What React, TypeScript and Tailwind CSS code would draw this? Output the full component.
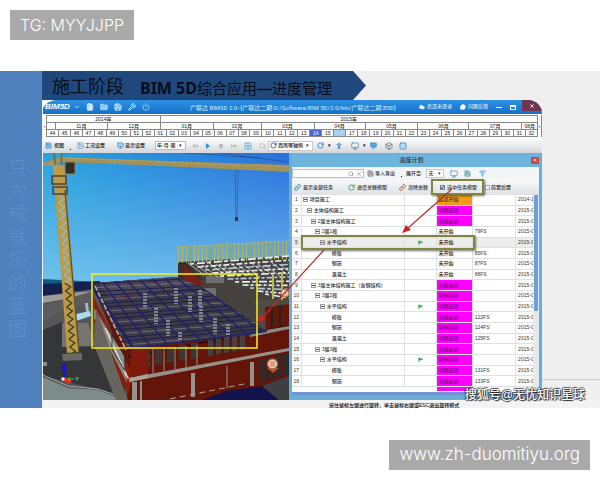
import {
  Box,
  ChevronDown,
  Cloud,
  FilePlus,
  Filter,
  Folder,
  Grid2x2,
  Image,
  Link,
  MessageCircle,
  Monitor,
  PersonStanding,
  Power,
  RotateCw,
  Save,
  Search,
  Wrench,
  X,
} from "lucide-react"

type Task = {
  name: string
  level: number
  leaf?: boolean
  flag?: boolean
  status: "延迟开始" | "可能延迟" | "未开始"
  code?: string
  date: string
}

const tasks: Task[] = [
  { name: "项目施工", level: 0, status: "延迟开始", date: "2014-1" },
  { name: "主体结构施工", level: 1, status: "可能延迟", date: "2015-0" },
  { name: "2层主体结构施工", level: 2, status: "可能延迟", date: "2015-0" },
  { name: "2层1段", level: 3, status: "未开始", code: "79FS", date: "2015-0" },
  { name: "水平结构", level: 4, flag: true, status: "未开始", date: "2015-0" },
  { name: "模板", level: 5, leaf: true, status: "未开始", code: "85FS", date: "2015-0" },
  { name: "钢筋", level: 5, leaf: true, status: "未开始", code: "87FS", date: "2015-0" },
  { name: "混凝土", level: 5, leaf: true, status: "未开始", code: "88FS", date: "2015-0" },
  { name: "3层主体结构施工（含钢结构）", level: 2, status: "可能延迟", date: "2015-0" },
  { name: "3层2段", level: 3, status: "可能延迟", date: "2015-0" },
  { name: "水平结构", level: 4, flag: true, status: "可能延迟", date: "2015-0" },
  { name: "模板", level: 5, leaf: true, status: "可能延迟", code: "122FS", date: "2015-0" },
  { name: "钢筋", level: 5, leaf: true, status: "可能延迟", code: "124FS", date: "2015-0" },
  { name: "混凝土", level: 5, leaf: true, status: "可能延迟", code: "125FS", date: "2015-0" },
  { name: "3层3段", level: 3, status: "可能延迟", date: "2015-0" },
  { name: "水平结构", level: 4, flag: true, status: "可能延迟", date: "2015-0" },
  { name: "模板", level: 5, leaf: true, status: "可能延迟", code: "131FS", date: "2015-0" },
  { name: "钢筋", level: 5, leaf: true, status: "可能延迟", code: "133FS", date: "2015-0" },
]

const indents = ["pl-px", "pl-[5px]", "pl-[9px]", "pl-[13px]", "pl-[18px]", "pl-[30px]"]

const statusColors = {
  延迟开始: "bg-[#f39a1c] text-[#5c3408]",
  可能延迟: "bg-[#ff00ff] text-[#7a007a]",
  未开始: "text-[#222]",
}

const years = [
  { label: "2014年", span: 113 },
  { label: "2015年", span: 377 },
]

const months = [
  { label: "", span: 8 },
  { label: "11月", span: 52 },
  { label: "12月", span: 53 },
  { label: "01月", span: 53 },
  { label: "02月", span: 48 },
  { label: "03月", span: 53 },
  { label: "04月", span: 51 },
  { label: "05月", span: 53 },
  { label: "06月", span: 51 },
  { label: "07月", span: 53 },
  { label: "08月", span: 15 },
]

const weeks = [
  ...Array.from({ length: 9 }, (_, i) => String(44 + i)),
  ...Array.from({ length: 32 }, (_, i) => String(i + 1).padStart(2, "0")),
]

const range = (n: number) => Array.from({ length: n }, (_, i) => i)

function Banner() {
  return (
    <header className="flex h-[29px] w-[324px] shrink-0 items-end bg-[#1f497d] pb-1 pl-2.5 whitespace-nowrap text-[#050d1c] [clip-path:polygon(0_0,96%_0,100%_50%,96%_100%,0_100%)]">
      <h1 className="text-[18px] leading-none">施工阶段</h1>
      <p className="ml-4 text-[15px] leading-none">
        <b className="font-['Noto_Sans'] text-[16px]">BIM 5D</b>
        综合应用<b>—</b>进度管理
      </p>
    </header>
  )
}

function TitleBar() {
  return (
    <div className="relative flex h-[14px] items-center overflow-hidden rounded-tr-[14px] bg-gradient-to-b from-[#2c92e6] to-[#1670c6] text-white">
      <svg className="absolute top-0 left-0 h-2 w-3" viewBox="0 0 12 8" aria-hidden="true">
        <path d="M0 0H12Q4 1 0 8Z" fill="#fff" />
      </svg>
      <strong className="relative w-7 pl-0.5 text-[8px] font-black italic">BIM5D</strong>
      <ChevronDown className="ml-[3px] size-1.5" strokeWidth={3} />
      <div className="ml-1.5 flex items-center gap-[6px] text-[#d5eaff]">
        <button type="button" aria-label="新建"><FilePlus className="size-2" fill="#b9dcfa" stroke="#fff" /></button>
        <button type="button" aria-label="打开"><Folder className="size-2" fill="#8ec5f4" /></button>
        <button type="button" aria-label="保存"><Save className="size-2" fill="#5aa9e8" strokeWidth={3} /></button>
        <button type="button" aria-label="工具"><Wrench className="size-2" strokeWidth={3} /></button>
        <button type="button" aria-label="退出"><Power className="size-2" /></button>
      </div>
      <span className="ml-10 flex-1 font-['Roboto','Noto_Sans_CJK_SC',sans-serif] text-[6px] whitespace-nowrap text-[#d9edff]">
        广联达 BIM5D 2.0--[广联达二期-D:/Software/BIM 5D/2.0/bin/广联达二期.B5D]
      </span>
      <a href="#login" className="flex items-center gap-0.5 text-[5px] whitespace-nowrap">
        <Cloud className="size-1.5" fill="#fff" />
        您还未登录
      </a>
      <a href="#feedback" className="ml-2 flex items-center gap-0.5 text-[5px] whitespace-nowrap">
        <MessageCircle className="size-1.5" fill="#fff" />
        问题反馈
      </a>
      <button type="button" aria-label="最小化" className="ml-2 h-px w-1.5 bg-white" />
      <button type="button" aria-label="最大化" className="ml-2 h-[5px] w-[6px] border border-t-2 border-white" />
      <button type="button" aria-label="关闭" className="ml-1.5 flex h-[11px] w-5 items-center justify-center self-start bg-[#703550]">
        <X className="size-1.5" strokeWidth={3} />
      </button>
    </div>
  )
}

function TimelineRow({ cells }: { cells: { label: string; span: number }[] }) {
  return (
    <div className="flex h-[7px] border-b border-[#888]">
      {cells.map((cell, i) => (
        <div
          key={i}
          className="basis-0 overflow-hidden border-r border-[#888] text-center whitespace-nowrap"
          style={{ flexGrow: cell.span }}
        >
          {cell.label}
        </div>
      ))}
    </div>
  )
}

function Timeline() {
  return (
    <div className="flex bg-[#fdfdfd] pt-px pb-px text-[5px] leading-[6px] font-medium text-[#222]">
      <button type="button" aria-label="上一页" className="w-1 border-r border-[#888]">‹</button>
      <div className="min-w-0 flex-1 border-t border-[#888]">
        <TimelineRow cells={years} />
        <TimelineRow cells={months} />
        <div className="flex h-[7px] border-b border-[#888] leading-[7px]">
          {weeks.map((week) => (
            <div
              key={week}
              className={
                week === "14"
                  ? "flex-1 border-r border-[#888] bg-[#4468dc] text-center text-white"
                  : week === "16"
                    ? "flex-1 border-r border-[#888] bg-[#a9d2f2] text-center text-[#a9d2f2]"
                    : "flex-1 border-r border-[#888] text-center"
              }
            >
              {week}
            </div>
          ))}
        </div>
      </div>
      <button type="button" aria-label="下一页" className="w-1 border-r border-[#888]">›</button>
    </div>
  )
}

function Toolbar() {
  return (
    <div className="flex h-[15px] items-center bg-gradient-to-b from-white to-[#d3d6da] pl-0.5 text-[5px] leading-none font-medium whitespace-nowrap text-[#222]">
      <button type="button" className="flex items-center gap-0.5">
        <Image className="size-[7px] text-[#3484c0]" fill="#8bc8ee" />
        视图
      </button>
      <span className="mt-2 ml-1.5 size-px bg-black" />
      <button type="button" className="ml-1.5 flex items-center gap-px">
        <Image className="size-[7px] text-[#4a88b8]" />
        工况设置
      </button>
      <button type="button" className="ml-3 flex items-center gap-px">
        <Monitor className="size-[7px] text-[#3484c0]" fill="#9fd0f3" />
        显示设置
      </button>
      <div className="ml-2.5 flex h-[9px] items-center border border-[#bbb] bg-white pl-px">
        <select aria-label="时间单位" className="w-[22px] appearance-none bg-transparent">
          <option>年-月-周</option>
        </select>
        <span className="w-1.5">▾</span>
      </div>
      <div className="ml-1.5 flex items-center gap-[7px]">
        <button type="button" aria-label="后退">
          <svg className="h-1.5 w-1.5" viewBox="0 0 6 6"><path d="M3 1V5L0 3ZM6 1V5L3 3Z" fill="#bbb" /></svg>
        </button>
        <button type="button" aria-label="播放">
          <svg className="h-1.5 w-1.5" viewBox="0 0 6 6"><path d="M1 0V6L5 3Z" fill="#2995d2" /></svg>
        </button>
        <button type="button" aria-label="停止">
          <svg className="h-1.5 w-1.5" viewBox="0 0 6 6"><path d="M1 1H5V5H1Z" fill="#bbb" /></svg>
        </button>
        <button type="button" aria-label="前进">
          <svg className="h-1.5 w-1.5" viewBox="0 0 6 6"><path d="M0 1V5L3 3ZM3 1V5L6 3Z" fill="#bbb" /></svg>
        </button>
        <button type="button" aria-label="四视图"><Grid2x2 className="size-2 text-[#3b9dda]" /></button>
        <button type="button" aria-label="快照"><Cloud className="size-[7px] text-[#aaa]" /></button>
      </div>
      <div className="ml-0.5 flex h-[10px] items-center border border-[#ccc] bg-white pl-px">
        <RotateCw className="size-[7px] text-[#225f9c]" strokeWidth={3} />
        <select aria-label="视角" className="ml-px w-[28px] appearance-none bg-transparent">
          <option>西南等轴侧</option>
        </select>
        <span className="w-1.5">▾</span>
      </div>
      <div className="ml-1 flex items-center text-[#2d80bd]">
        <button type="button" aria-label="旋转"><RotateCw className="size-[7px]" strokeWidth={3} /></button>
        <span className="ml-1 text-black">▾</span>
        <button type="button" aria-label="漫游" className="ml-1"><PersonStanding className="size-2" strokeWidth={3} /></button>
        <button type="button" aria-label="测量" className="ml-2"><Monitor className="size-2" /></button>
        <span className="ml-1 text-black">▾</span>
        <button type="button" aria-label="标注" className="ml-1"><Monitor className="size-[7px]" fill="#5ca9dd" /></button>
        <button type="button" aria-label="剖切" className="ml-2 text-[#555]"><Box className="size-2" /></button>
        <button type="button" aria-label="布局" className="ml-1.5"><Grid2x2 className="size-2" fill="#b7d9f1" /></button>
      </div>
    </div>
  )
}

// The view box keeps the coordinates of the slide, so that parts line up with the callouts.
function Scene() {
  return (
    <svg
      className="block h-full w-full"
      viewBox="43 153 246 247"
      preserveAspectRatio="none"
      role="img"
      aria-label="施工现场三维模型"
    >
      <defs>
        <linearGradient id="sky" x1="0" x2="1" y1="0" y2="0">
          <stop offset="0" stopColor="#27a3dc" />
          <stop offset="1" stopColor="#2870dc" />
        </linearGradient>
        <linearGradient id="haze" x1="0" x2="0" y1="0" y2="1">
          <stop offset="0" stopColor="#8fd0f2" stopOpacity="0" />
          <stop offset="1" stopColor="#8fd0f2" stopOpacity="0.7" />
        </linearGradient>
        <clipPath id="roof">
          <path d="M94 283L176 277L200 286L267 331L250 335L134 348H128L94 292Z" />
        </clipPath>
      </defs>
      <rect x="43" y="153" width="246" height="130" fill="url(#sky)" />
      <rect x="43" y="153" width="246" height="130" fill="url(#haze)" />

      {/* ground */}
      <path d="M43 279L100 282V400H43Z" fill="#0d5c86" />
      <path d="M43 284L100 281V400H43Z" fill="#14204f" />
      <path d="M43 296L100 288L289 290V400H43Z" fill="#565658" />
      <path d="M43 296L92 291V294L43 303Z" fill="#a09c96" />
      <path d="M43 306L93 291V302L62 312L43 322Z" fill="#5d5c5c" />
      <path d="M43 330L62 322L95 345L125 385V396L43 376Z" fill="#353638" />
      <path d="M62 323H88L96 346L62 347Z" fill="#77736e" />
      <path d="M76 314L90 311L91 316L76 321Z" fill="#a9daf4" />
      <path d="M85 303H88L89 312H86Z" fill="#9bb9c8" />
      <path d="M43 362H47V366H43Z" fill="#8a8a88" />
      <path d="M43 377L68 388L98 390L124 400H43Z" fill="#7d8c89" />
      <path d="M43 375L68 386L98 389L124 398" fill="none" stroke="#a0aaa6" />

      {/* rear block */}
      <path d="M178 262L289 256V340H220L178 284Z" fill="#46423f" />
      <path d="M178 262H186L204 280H178Z" fill="#3b302c" />
      <path d="M184 266L205 285H184Z" fill="#7c1e13" />
      <path d="M199 288H216V296H201ZM206 276H224V283H206ZM205 301L221 305V310H210Z" fill="#706e6d" />
      <path d="M255 300H289V345H262Z" fill="#514b48" />
      <path d="M265 307L289 304V333L266 336Z" fill="#64180c" />
      <path d="M272 306V334M280 305V333" stroke="#25221f" strokeWidth="2" />
      {range(28).map((i) => (
        <path
          key={i}
          d={`M${178.5 + i * 4} ${246 - i * 0.18}V${263 - i * 0.14}`}
          stroke={i % 5 === 3 ? "#8fa85c" : "#b4b75f"}
          strokeWidth={i % 5 === 3 ? 2 : 1}
        />
      ))}
      <path d="M178 247L289 241" stroke="#b8b96d" strokeWidth="0.6" />
      {range(11).map((row) => (
        <path
          key={row}
          d={`M${190 + row * 7.5} ${264 + row * 3}L289 ${256 + row * 4.2}`}
          stroke={row % 3 === 2 ? "#b5c9d2" : "#e7edf0"}
          strokeWidth="1.7"
          strokeDasharray={row % 2 ? "6 2 3 2" : "4 3 8 2"}
        />
      ))}
      {range(14).map((i) => (
        <path
          key={i}
          d={`M${188 + i * 7} ${263 + (i % 3)}l16 12`}
          stroke="#dbe4e8"
          strokeWidth="0.7"
        />
      ))}
      <path d="M273 275V299M282 272V300" stroke="#b9b84e" strokeWidth="2" />

      {/* front block */}
      <path d="M92 284L131 378L126 400H289V325L250 333L134 348Z" fill="#641509" />
      <path d="M92 294L133 375L128 395L94 322Z" fill="#88200d" />
      <path d="M94 308L124 355L127 383L94 318Z" fill="#8c8983" />
      <path d="M96 308L121 382L128 400H116L94 345Z" fill="#68655f" />
      {range(13).map((i) => (
        <path key={i} d={`M${105 + i * 1.7} ${328 + i * 3.8}l3 5`} stroke="#ddd" strokeWidth="1.4" />
      ))}
      <path d="M112 334V349L125 371V357Z" fill="none" stroke="#272727" />
      <path d="M128 357L289 326" stroke="#350c08" strokeWidth="2" />
      {range(5).map((i) => (
        <path key={i} d={`M${143 + i * 12} ${351 - i * 2}h7v15l-7 1z`} fill="#3a3837" />
      ))}
      {range(5).map((i) => (
        <path key={i} d={`M${208 + i * 8} ${340 - i * 1.5}h5v15l-5 1z`} fill="#45413f" />
      ))}
      {range(6).map((i) => (
        <path key={i} d={`M${142 + i * 11} ${350 - i}v${25 - i}`} stroke="#958f87" />
      ))}
      <path d="M129 378L289 348V351L129 382Z" fill="#96918a" />
      <path d="M250 333L289 326V329L250 337Z" fill="#8f8984" />
      <path d="M191 373H195V397H191ZM250 362H254V386H250ZM132 382H137V400H132ZM140 381H142V400H140Z" fill="#96918a" />
      <path d="M227 366V388" stroke="#96918a" />
      <path d="M170 399L244 384" stroke="#aaa49a" strokeDasharray="6 4" />
      {range(4).map((i) => (
        <path key={i} d={`M${260 + i * 8} ${360 - i * 2}v20l5 3v-24z`} fill="#2e292a" />
      ))}
      <path d="M202 400L226 391L262 386L279 400Z" fill="#12134c" />
      <path d="M262 386L289 376V400H279Z" fill="#3d3f42" />

      {/* steel roof */}
      <g clipPath="url(#roof)">
        <rect x="90" y="270" width="180" height="80" fill="#3d3b43" />
        <path d="M116 281L130 279L132 297L120 297Z" fill="#6b1620" />
        <path d="M90 272H178L200 286L110 298Z" fill="#4c4653" />
        {range(19).map((i) => (
          <path
            key={i}
            d={`M92 ${284 + i * 4}L275 ${274 + i * 3.6}`}
            stroke={i % 3 === 1 ? "#6b6a81" : "#1c1c52"}
            strokeWidth="1"
          />
        ))}
        {range(9).map((i) => (
          <path
            key={i}
            d={`M${86 + i * 13} 278L${134 + i * 19} 350`}
            stroke="#222266"
            strokeWidth="1.6"
          />
        ))}
        {[
          [145, 293], [156, 308], [168, 320], [180, 332], [176, 288],
          [190, 296], [201, 306], [215, 318], [228, 324], [200, 290],
        ].map(([x, y]) => (
          <path key={`${x}-${y}`} d={`M${x} ${y}v16`} stroke="#85838e" strokeWidth="4" strokeDasharray="2 1" />
        ))}
      </g>
      <path d="M92 284L134 348L267 331" fill="none" stroke="#25255f" strokeWidth="2" />
      <path d="M95 286L126 350" stroke="#b7b3b0" strokeWidth="1.5" strokeDasharray="5 2" />
      <path d="M132 348H148V376H129Z" fill="#7e1a0b" />
      <path d="M130 378L148 374V378L130 382Z" fill="#aaa59c" />

      {/* tower crane */}
      <path d="M43 162L62 157L140 160L289 165V172L140 165L62 162L43 166Z" fill="#a39257" />
      <path d="M62 158L140 161L289 167" fill="none" stroke="#c4ac68" strokeDasharray="2 2" strokeWidth="0.8" />
      <path d="M43 162H57V166H43Z" fill="#9d9572" />
      <path d="M54 153L58 190M62 153L60 190" stroke="#786e40" strokeWidth="2" />
      <path d="M220 153L289 162M185 153L260 158" stroke="#2a5388" strokeWidth="0.7" />
      <rect x="65" y="162" width="10" height="12" fill="#352d25" stroke="#94854e" />
      <path d="M53 165H64L79 352L67 353Z" fill="#bd9a43" />
      <path d="M65 190L79 352" stroke="#5d542c" strokeWidth="1.4" />
      {range(20).map((i) => (
        <path
          key={i}
          d={`M${58 + i * 0.6} ${195 + i * 8}l6 4l-5 4`}
          fill="none"
          stroke={i < 11 ? "#8cbcd0" : "#3f3a26"}
          strokeWidth="1.3"
        />
      ))}
      <path d="M52 176H66V184H52ZM53 187H67V194H53Z" fill="none" stroke="#4b4536" strokeWidth="1.5" />
      <path d="M62 354L82 353V360L63 361Z" fill="#6a6867" />
      <path d="M235 170L236 219M238 170L237 219" stroke="#36527a" strokeWidth="0.6" />
      <path d="M235 217h3v4h-3z" fill="#3a3742" />

      {/* axis gizmo */}
      <path d="M64 379V367" stroke="#1616d8" strokeWidth="2" />
      <path d="M61 369L64 362L67 369Z" fill="#1616d8" />
      <path d="M64 379L71 382" stroke="#ee2a16" strokeWidth="4" />
      <path d="M68 379H74M70 377L68 379L70 381" stroke="#39c95a" fill="none" />
      <text x="75" y="381" fontSize="6" fontWeight="700" fill="#56c96a">Y</text>
      <circle cx="63" cy="379" r="1.8" fill="#eee" />

      <path d="M267 368L273 373L279 368Z" fill="#b1552f" />
      <circle cx="272.5" cy="364" r="5" fill="#f3dccb" stroke="#b66340" strokeWidth="1.5" />
      <path d="M270 362h5M270 364h5M270 366h5" stroke="#b86443" />
      <circle cx="285" cy="293" r="4" fill="#efc6a8" stroke="#bd6c43" />
      <rect x="92" y="274" width="165" height="74" fill="none" stroke="#f3f21f" strokeWidth="1.5" />
    </svg>
  )
}

function TaskRow({ task, index }: { task: Task; index: number }) {
  return (
    <tr className={index === 4 ? "bg-[#ececec]" : "bg-white"}>
      <td className="border-r border-b border-[#dde1e5] p-0 text-center">{index + 1}</td>
      <td className="border-r border-b border-[#dde1e5] p-0">
        <div className={`flex h-[5px] items-center gap-0.5 ${indents[task.level]}`}>
          {task.leaf ? null : (
            <button
              type="button"
              aria-label="折叠"
              className="flex size-[5px] shrink-0 items-center justify-center border border-[#999]"
            >
              <span className="h-px w-[3px] bg-[#555]" />
            </button>
          )}
          {task.name}
        </div>
      </td>
      <td className="border-r border-b border-[#dde1e5] p-0">
        {task.flag ? (
          <svg className="mx-auto size-[5px]" viewBox="0 0 6 6" aria-label="标记">
            <path d="M1 1V6" stroke="#2f8e3a" />
            <path d="M1 1H3L4 2H6L5 4H3L1 4Z" fill="#3cac4b" />
          </svg>
        ) : null}
      </td>
      <td className={`border-r border-b border-[#dde1e5] p-0 pl-0.5 ${statusColors[task.status]}`}>{task.status}</td>
      <td className="border-r border-b border-[#dde1e5] p-0 pl-0.5">{task.code}</td>
      <td className="overflow-hidden border-b border-[#dde1e5] p-0 pl-0.5">{task.date}</td>
    </tr>
  )
}

function SchedulePanel() {
  return (
    <section className="flex min-w-0 flex-1 flex-col border-x-[3px] border-b-[5px] border-[#6aafd3] bg-white text-[5px] leading-none font-medium whitespace-nowrap text-[#333]">
      <div className="flex h-[14px] items-center bg-[#6db5dc]">
        <h2 className="flex-1 text-center text-[6px]">进度计划</h2>
        <button type="button" aria-label="关闭面板" className="flex h-[7px] w-2 items-center justify-center bg-[#cf4647] text-white">
          <X className="size-1" strokeWidth={4} />
        </button>
      </div>

      <div className="flex h-[13px] items-center bg-[#f4f5f6]">
        <div className="flex h-[9px] w-[72px] items-center border border-[#b8bec4] bg-white pr-px">
          <input aria-label="搜索任务" className="min-w-0 flex-1 outline-none" />
          <Search className="size-1.5 text-[#777]" />
          <X className="ml-0.5 size-1.5 text-[#777]" />
        </div>
        <button type="button" className="ml-[3px] flex items-center gap-px">
          <Save className="size-[7px] text-[#2d80bd]" fill="#f3b5a0" />
          导入导出
        </button>
        <span className="mt-1.5 ml-1.5 size-px bg-black" />
        <label htmlFor="expand" className="ml-1">展开至:</label>
        <select id="expand" className="ml-1 h-[9px] w-3 appearance-none border border-r-0 border-[#c4c8cc] bg-white pl-px">
          <option>无</option>
        </select>
        <span className="flex h-[9px] w-1.5 items-center border border-l-0 border-[#c4c8cc] bg-white">▾</span>
        <button type="button" aria-label="视图" className="ml-1.5"><Monitor className="size-2 text-[#3d8cc4]" /></button>
        <button type="button" aria-label="刷新" className="ml-1.5"><Save className="size-[7px] text-[#3d8cc4]" fill="#badf9a" /></button>
        <button type="button" aria-label="筛选" className="ml-2"><Filter className="size-[7px] text-[#3b9ed8]" fill="#a9d8f1" /></button>
      </div>

      <div className="flex h-[15px] items-center bg-gradient-to-b from-[#f6f7f8] to-[#dfe2e5] pl-0.5">
        <button type="button" className="flex items-center gap-0.5">
          <Link className="size-[7px] text-[#2b8b9b]" strokeWidth={3} />
          显示全部任务
        </button>
        <button type="button" className="ml-[15px] flex items-center gap-0.5">
          <RotateCw className="size-[7px] text-[#3b9b55]" strokeWidth={3} />
          进度关联模型
        </button>
        <button type="button" className="ml-3 flex items-center gap-0.5">
          <Link className="size-[7px] text-[#c05542]" strokeWidth={3} />
          清除关联
        </button>
        <label className="ml-3 flex items-center gap-0.5">
          <span className="relative flex size-[5px] items-center justify-center">
            <input type="checkbox" defaultChecked className="size-[5px] appearance-none border border-[#789] bg-white" />
            <svg className="pointer-events-none absolute inset-0" viewBox="0 0 5 5">
              <path d="M1 2L2 4L4 1" fill="none" stroke="#174e8c" />
            </svg>
          </span>
          选中任务模型
        </label>
        <label className="ml-2 flex items-center gap-px">
          <input type="checkbox" className="size-[5px] appearance-none border border-[#aab] bg-white" />
          前置后置
        </label>
      </div>

      <div className="flex min-h-0 flex-1 overflow-hidden">
        <div className="min-w-0 flex-1">
          <table className="h-[192px] w-full table-fixed border-separate border-spacing-0">
            <colgroup>
              <col className="w-[4%]" />
              <col className="w-[43%]" />
              <col className="w-[13%]" />
              <col className="w-[15%]" />
              <col className="w-[18%]" />
              <col className="w-[7%]" />
            </colgroup>
            <tbody>
              {tasks.map((task, i) => (
                <TaskRow key={i} task={task} index={i} />
              ))}
            </tbody>
          </table>
          <div className="flex h-1">
            <div className="w-[60%]" />
            <div className="w-[15%] bg-[#ff00ff]" />
          </div>
        </div>
        <div className="w-1.5 bg-[#e6e9ed] px-px">
          <div className="h-[116px] bg-[#6d9fdb]" />
        </div>
      </div>
      <div className="h-[3px] bg-[#6d93d4]" />
    </section>
  )
}

function Callouts() {
  return (
    <>
      <div className="absolute top-[79px] right-[58px] h-4 w-[53px] border-2 border-[#7f8640] shadow-[1px_1px_2px_#0008]" />
      <div className="absolute top-[135px] right-[67px] h-[15px] w-[174px] border-2 border-[#7f8640] shadow-[1px_1px_2px_#0008]" />
      <svg className="absolute top-[79px] right-[58px] h-[150px] w-[230px]" viewBox="254 179 230 150" aria-hidden="true">
        <path d="M452 189L407 229M324 250L262 318" stroke="#b52d2d" strokeWidth="1.2" />
        <path d="M402 233L406 225L411 230ZM257 323L260 314L266 319Z" fill="#c42424" />
      </svg>
    </>
  )
}

export default function App() {
  return (
    <main lang="zh-CN" className="relative flex min-h-screen flex-col bg-white font-['Liberation_Sans','Noto_Sans_CJK_SC',sans-serif]">
      <div className="flex h-[71px] items-start p-2.5">
        <p className="flex h-[30px] items-center bg-[#a9a9a9] px-2.5 font-['Inter',sans-serif] text-[16px] font-light text-white">
          TG: MYYJJPP
        </p>
      </div>

      <div className="relative flex h-[337px] overflow-hidden bg-[#efefef]">
        <aside className="flex w-[42px] shrink-0 flex-col bg-[#4f81bd] pt-[86px] pl-2 text-[19px] leading-[23px] font-light text-[#608ec8]">
          {"只为成就您的蓝图".split("").map((char) => (
            <span key={char}>{char}</span>
          ))}
        </aside>
        <div className="flex min-w-0 flex-1 flex-col">
          <Banner />
          <div className="relative mr-[58px] ml-px shrink-0">
            <TitleBar />
            <Timeline />
            <Toolbar />
            <div className="flex h-[247px]">
              <div className="w-[246px] shrink-0">
                <Scene />
              </div>
              <SchedulePanel />
            </div>
            <Callouts />
          </div>
          <p className="bg-[#f3f3f3] pt-px pl-[287px] text-[5px] leading-[8px] font-medium whitespace-nowrap text-black">
            按住鼠标左键进行旋转，单击鼠标右键或ESC退出旋转模式
          </p>
        </div>
        <div className="absolute right-0 bottom-7 w-[58px] border-t border-[#c8cdd2]" />
        <p className="absolute right-[15px] bottom-1 text-[12px] leading-[18px] font-medium whitespace-nowrap text-white [text-shadow:1px_1px_1px_#222,-1px_0_1px_#333,0_-1px_1px_#444]">
          搜狐号@无忧知识星球
        </p>
      </div>

      <footer className="mt-8 flex justify-end pr-2.5">
        <a
          href="#home"
          className="flex h-[30px] items-center bg-[#a9a9a9] px-2.5 font-['Inter',sans-serif] text-[17px] font-light text-white"
        >
          www.zh-duomitiyu.org
        </a>
      </footer>
    </main>
  )
}
